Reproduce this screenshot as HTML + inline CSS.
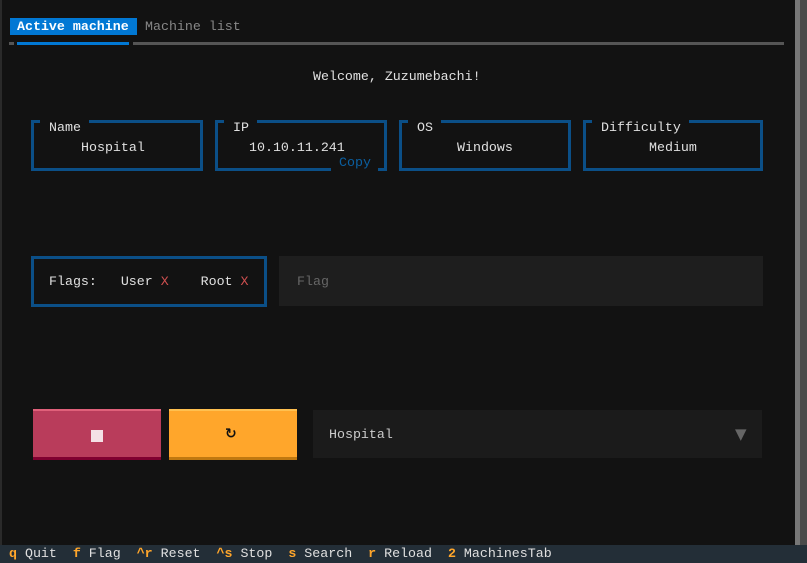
<!DOCTYPE html><html><head><style>
body{margin:0;width:807px;height:563px;background:#121212;position:relative;overflow:hidden;font-family:"Liberation Mono",monospace;font-size:13.3px;color:#e0e0e0}
.a{position:absolute;white-space:pre;line-height:18px}
.box{position:absolute;border:3px solid #0b4f87;box-sizing:border-box}
.t{position:absolute;top:-4px;background:#121212;padding:0 8px 0 9px;line-height:18px;white-space:pre}
.k{color:#ffa62b;font-weight:bold}
</style></head><body>
<div style="position:absolute;left:0;top:0;width:2px;height:563px;background:#2a2a2a"></div>
<div style="position:absolute;left:795px;top:0;width:5px;height:545px;background:#777"></div>
<div style="position:absolute;left:800px;top:0;width:7px;height:545px;background:#4a4a4a"></div>
<div class="a" style="left:10px;top:18px;width:127px;height:17px;background:#0178d4;color:#fff;font-weight:bold;padding-left:7px;box-sizing:border-box">Active machine</div>
<div class="a" style="left:145px;top:18px;color:#888">Machine list</div>
<div style="position:absolute;left:9px;top:42px;width:5px;height:3px;background:#555"></div>
<div style="position:absolute;left:17px;top:42px;width:112px;height:3px;background:#0178d4"></div>
<div style="position:absolute;left:133px;top:42px;width:651px;height:3px;background:#555"></div>
<div class="a" style="left:313px;top:68px">Welcome, Zuzumebachi!</div>

<div class="box" style="left:31px;top:120px;width:172px;height:51px"><span class="t" style="left:6px">Name</span><div class="a" style="left:47px;top:16px">Hospital</div></div>
<div class="box" style="left:215px;top:120px;width:172px;height:51px"><span class="t" style="left:6px">IP</span><div class="a" style="left:31px;top:16px">10.10.11.241</div><div class="a" style="left:113px;top:33px;background:#121212;color:#0b5fa0;padding:0 7px 0 8px;line-height:14px;height:16px">Copy</div></div>
<div class="box" style="left:399px;top:120px;width:172px;height:51px"><span class="t" style="left:6px">OS</span><div class="a" style="left:55px;top:16px">Windows</div></div>
<div class="box" style="left:583px;top:120px;width:180px;height:51px"><span class="t" style="left:6px">Difficulty</span><div class="a" style="left:63px;top:16px">Medium</div></div>

<div class="box" style="left:31px;top:256px;width:236px;height:51px"></div>
<div class="a" style="left:49px;top:273px">Flags:   User <span style="color:#d05050">X</span>    Root <span style="color:#d05050">X</span></div>
<div style="position:absolute;left:279px;top:256px;width:484px;height:50px;background:#1e1e1e"></div>
<div class="a" style="left:297px;top:273px;color:#666">Flag</div>

<div style="position:absolute;left:33px;top:409px;width:128px;height:51px;background:#b93c5b;border-top:2px solid #e0607a;border-bottom:3px solid #800030;box-sizing:border-box"></div>
<div style="position:absolute;left:91px;top:430px;width:12px;height:12px;background:#f4e0e6"></div>
<div style="position:absolute;left:169px;top:409px;width:128px;height:51px;background:#ffa62b;border-top:2px solid #ffc050;border-bottom:3px solid #c07810;box-sizing:border-box"></div>
<div class="a" style="left:225px;top:425px;color:#111;font-weight:bold;font-family:'DejaVu Sans',sans-serif;font-size:14px">↻</div>
<div style="position:absolute;left:313px;top:410px;width:449px;height:48px;background:#1b1b1b"></div>
<div class="a" style="left:329px;top:426px;color:#ccc">Hospital</div>
<div class="a" style="left:735px;top:425px;color:#666;font-family:'DejaVu Sans',sans-serif;font-size:15px">▼</div>

<div style="position:absolute;left:0;top:545px;width:807px;height:18px;background:#232e37"></div>
<div class="a" style="left:9px;top:545px"><span class="k">q</span> Quit  <span class="k">f</span> Flag  <span class="k">^r</span> Reset  <span class="k">^s</span> Stop  <span class="k">s</span> Search  <span class="k">r</span> Reload  <span class="k">2</span> MachinesTab</div>
</body></html>
